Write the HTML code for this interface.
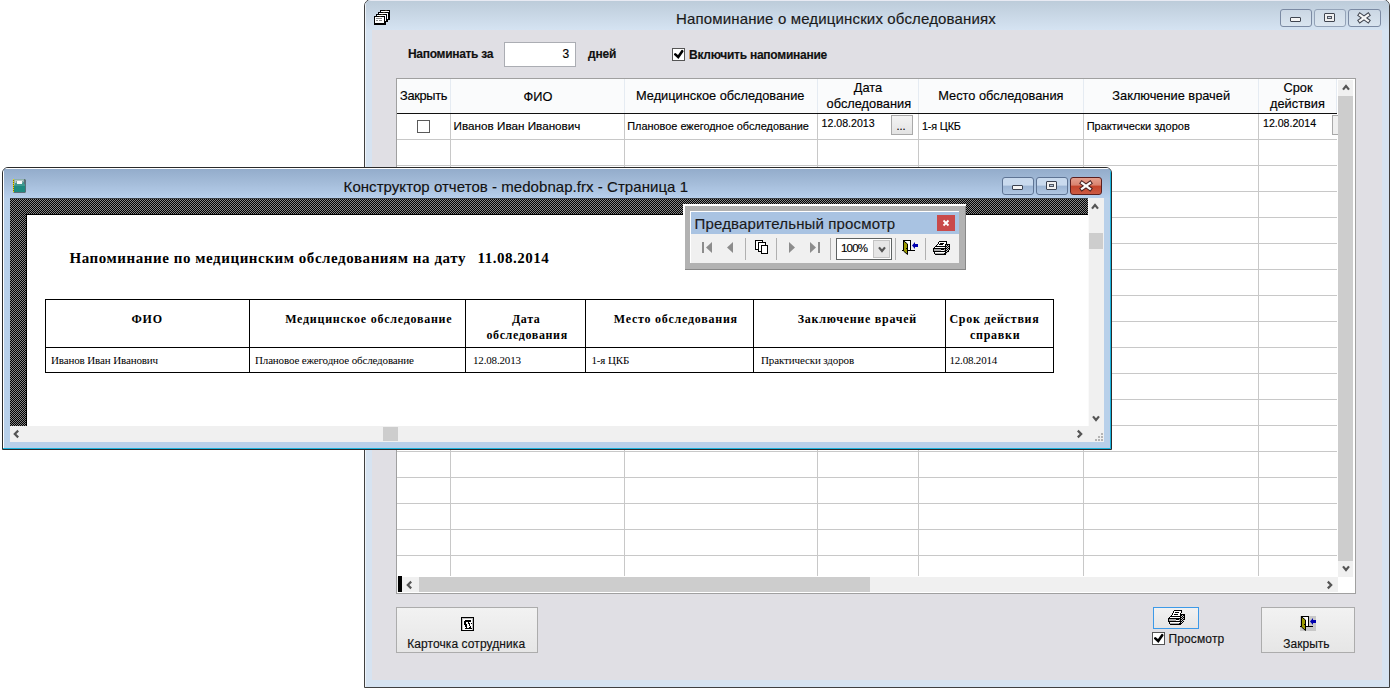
<!DOCTYPE html>
<html><head><meta charset="utf-8">
<style>
*{margin:0;padding:0;box-sizing:border-box}
html,body{width:1393px;height:690px;overflow:hidden;background:#fff;position:relative}
div,span,svg{position:absolute}
.t{font-family:"Liberation Sans",sans-serif;line-height:1;white-space:nowrap;color:#000;-webkit-text-stroke:0.15px currentColor}
.r{font-family:"Liberation Serif",serif;line-height:1;white-space:nowrap;color:#000}
.b{font-weight:bold}
</style></head><body>

<!-- ============ MAIN WINDOW ============ -->
<div id="mw" style="left:364px;top:-1px;width:1026px;height:689px;border:1px solid #404040;border-radius:7px 7px 0 0;background:#d6e3f1;overflow:hidden">
  <div style="left:0;top:0;right:0;height:30px;background:linear-gradient(#bccbd9,#d5e3f2)"></div>
  <div style="left:0;top:0;right:0;height:1px;background:#e8eaf3"></div>
  <div style="left:0;top:0;bottom:0;width:1px;background:#eef3f9"></div>
</div>
<!-- client -->
<div style="left:372px;top:30px;width:1010px;height:650px;background:#e0dfe4"></div>

<span class="t" style="left:676px;top:11px;font-size:15px;letter-spacing:0.15px;color:#1a1a1a">Напоминание о медицинских обследованиях</span>

<!-- main title buttons -->
<div style="left:1280px;top:9px;width:32px;height:18px;border:1px solid #7b8aa3;border-radius:3px;background:linear-gradient(#cbd7e4,#d9e4ef)"><div style="left:9px;top:7px;width:11px;height:5px;border:1px solid #404550;border-radius:1px;background:#f4f4f4"></div></div>
<div style="left:1314px;top:9px;width:32px;height:18px;border:1px solid #94a3b8;border-radius:3px;background:linear-gradient(#cfdbe7,#dce6f0)"><div style="left:9px;top:3px;width:11px;height:9px;border:1px solid #404550;border-radius:1px;background:#f0f0f0"><div style="left:2px;top:2px;width:5px;height:3px;border:1px solid #505560;background:#cfd8e6"></div></div></div>
<div style="left:1348px;top:9px;width:33px;height:18px;border:1px solid #7b8aa3;border-radius:3px;background:linear-gradient(#cbd7e4,#d9e4ef)">
<svg style="left:8px;top:2px" width="14" height="12" viewBox="0 0 14 12"><path d="M3 3 L11 8.8 M11 3 L3 8.8" stroke="#404550" stroke-width="4.2" stroke-linecap="square"/><path d="M3 3 L11 8.8 M11 3 L3 8.8" stroke="#f6f6f6" stroke-width="2.2" stroke-linecap="square"/></svg></div>

<!-- main icon -->
<svg style="left:374px;top:10px;" width="16" height="15" viewBox="0 0 16 15" shape-rendering="crispEdges"><rect x="6" y="0" width="5" height="1" fill="#000"/><rect x="11" y="0" width="2" height="1" fill="#3a2a10"/><rect x="13" y="0" width="3" height="1" fill="#000"/><rect x="6" y="1" width="1" height="1" fill="#000"/><rect x="7" y="1" width="8" height="1" fill="#fff"/><rect x="15" y="1" width="1" height="1" fill="#000"/><rect x="4" y="2" width="5" height="1" fill="#000"/><rect x="9" y="2" width="2" height="1" fill="#3a2a10"/><rect x="11" y="2" width="5" height="1" fill="#000"/><rect x="4" y="3" width="1" height="1" fill="#000"/><rect x="5" y="3" width="9" height="1" fill="#fff"/><rect x="14" y="3" width="2" height="1" fill="#000"/><rect x="2" y="4" width="5" height="1" fill="#000"/><rect x="7" y="4" width="2" height="1" fill="#3a2a10"/><rect x="9" y="4" width="4" height="1" fill="#000"/><rect x="13" y="4" width="1" height="1" fill="#fff"/><rect x="14" y="4" width="2" height="1" fill="#000"/><rect x="2" y="5" width="1" height="1" fill="#000"/><rect x="3" y="5" width="9" height="1" fill="#fff"/><rect x="12" y="5" width="1" height="1" fill="#000"/><rect x="13" y="5" width="1" height="1" fill="#fff"/><rect x="14" y="5" width="2" height="1" fill="#000"/><rect x="0" y="6" width="5" height="1" fill="#000"/><rect x="5" y="6" width="2" height="1" fill="#3a2a10"/><rect x="7" y="6" width="4" height="1" fill="#000"/><rect x="11" y="6" width="1" height="1" fill="#fff"/><rect x="12" y="6" width="1" height="1" fill="#000"/><rect x="13" y="6" width="1" height="1" fill="#fff"/><rect x="14" y="6" width="2" height="1" fill="#000"/><rect x="0" y="7" width="1" height="1" fill="#000"/><rect x="1" y="7" width="9" height="1" fill="#fff"/><rect x="10" y="7" width="1" height="1" fill="#000"/><rect x="11" y="7" width="1" height="1" fill="#fff"/><rect x="12" y="7" width="1" height="1" fill="#000"/><rect x="13" y="7" width="1" height="1" fill="#fff"/><rect x="14" y="7" width="2" height="1" fill="#000"/><rect x="0" y="8" width="1" height="1" fill="#000"/><rect x="1" y="8" width="1" height="1" fill="#fff"/><rect x="2" y="8" width="6" height="1" fill="#888"/><rect x="8" y="8" width="2" height="1" fill="#fff"/><rect x="10" y="8" width="1" height="1" fill="#000"/><rect x="11" y="8" width="1" height="1" fill="#fff"/><rect x="12" y="8" width="1" height="1" fill="#000"/><rect x="13" y="8" width="1" height="1" fill="#fff"/><rect x="14" y="8" width="2" height="1" fill="#000"/><rect x="0" y="9" width="1" height="1" fill="#000"/><rect x="1" y="9" width="9" height="1" fill="#fff"/><rect x="10" y="9" width="1" height="1" fill="#000"/><rect x="11" y="9" width="1" height="1" fill="#fff"/><rect x="12" y="9" width="4" height="1" fill="#000"/><rect x="0" y="10" width="1" height="1" fill="#000"/><rect x="1" y="10" width="1" height="1" fill="#fff"/><rect x="2" y="10" width="2" height="1" fill="#888"/><rect x="4" y="10" width="1" height="1" fill="#fff"/><rect x="5" y="10" width="3" height="1" fill="#888"/><rect x="8" y="10" width="2" height="1" fill="#fff"/><rect x="10" y="10" width="1" height="1" fill="#000"/><rect x="11" y="10" width="1" height="1" fill="#fff"/><rect x="12" y="10" width="2" height="1" fill="#000"/><rect x="0" y="11" width="1" height="1" fill="#000"/><rect x="1" y="11" width="9" height="1" fill="#fff"/><rect x="10" y="11" width="4" height="1" fill="#000"/><rect x="0" y="12" width="1" height="1" fill="#000"/><rect x="1" y="12" width="9" height="1" fill="#fff"/><rect x="10" y="12" width="2" height="1" fill="#000"/><rect x="0" y="13" width="12" height="1" fill="#000"/><rect x="0" y="14" width="12" height="1" fill="#000"/></svg>

<!-- controls row -->
<span class="t b" style="left:408px;top:48.2px;font-size:12px;letter-spacing:-0.3px;color:#111">Напоминать за</span>
<div style="left:504px;top:42px;width:72px;height:25px;border:1px solid #abadb3;background:#fff"></div>
<span class="t" style="left:562.5px;top:48.2px;font-size:12px">3</span>
<span class="t b" style="left:588px;top:48.2px;font-size:12px;letter-spacing:-0.2px;color:#111">дней</span>
<div style="left:672px;top:48px;width:13px;height:13px;border:1px solid #555;background:#fff">
<svg style="left:0px;top:0px" width="11" height="11" viewBox="0 0 11 11"><path d="M2.3 5.4 L5.2 8 L9.2 2.2" stroke="#000" stroke-width="2.6" fill="none" stroke-linecap="round" stroke-linejoin="miter"/></svg></div>
<span class="t b" style="left:689px;top:48.8px;font-size:12px;letter-spacing:-0.25px;color:#111">Включить напоминание</span>

<!-- ============ GRID ============ -->
<div id="grid" style="left:396px;top:78px;width:960px;height:516px;border:1px solid #a0a0a0;background:#fff;overflow:hidden">
  <!-- header -->
  <div style="left:0;top:0;width:940px;height:34px;background:#fafbfc"></div>
  <div style="left:939px;top:0;width:1px;height:34px;background:#e5ebf2"></div>
  <div style="left:0;top:34px;width:940px;height:1px;background:#101010"></div>
  <!-- header dividers -->
  <div style="left:53px;top:0;width:1px;height:34px;background:#e5ebf2"></div>
  <div style="left:227px;top:0;width:1px;height:34px;background:#e5ebf2"></div>
  <div style="left:420px;top:0;width:1px;height:34px;background:#e5ebf2"></div>
  <div style="left:521px;top:0;width:1px;height:34px;background:#e5ebf2"></div>
  <div style="left:686px;top:0;width:1px;height:34px;background:#e5ebf2"></div>
  <div style="left:861px;top:0;width:1px;height:34px;background:#e5ebf2"></div>
  <!-- body row lines -->
  <div style="left:0;top:35px;width:940px;height:461px;background:repeating-linear-gradient(to bottom,transparent 0,transparent 25px,#c8c8c8 25px,#c8c8c8 26px)"></div>
  <!-- body col lines -->
  <div style="left:53px;top:35px;width:1px;height:462px;background:#c8c8c8"></div>
  <div style="left:227px;top:35px;width:1px;height:462px;background:#c8c8c8"></div>
  <div style="left:420px;top:35px;width:1px;height:462px;background:#c8c8c8"></div>
  <div style="left:521px;top:35px;width:1px;height:462px;background:#c8c8c8"></div>
  <div style="left:686px;top:35px;width:1px;height:462px;background:#c8c8c8"></div>
  <div style="left:861px;top:35px;width:1px;height:462px;background:#c8c8c8"></div>
  <!-- v scrollbar -->
  <div style="left:941px;top:1px;width:15px;height:497px;background:#f0f0f0"></div>
  <div style="left:941px;top:17px;width:15px;height:465px;background:#cdcdcd"></div>
  <!-- h scrollbar -->
  <div style="left:0;top:498px;width:941px;height:15px;background:#f0f0f0"></div>
  <div style="left:1px;top:497px;width:4px;height:16px;background:#000"></div>
  <div style="left:22px;top:498px;width:451px;height:15px;background:#cdcdcd"></div>
</div>
<svg style="left:1341px;top:84px" width="10" height="7" viewBox="0 0 10 7"><path d="M2 5.6 L5 2 L8 5.6" stroke="#555" stroke-width="2.2" fill="none"/></svg>
<svg style="left:1341px;top:565px" width="10" height="7" viewBox="0 0 10 7"><path d="M2 1.4 L5 5 L8 1.4" stroke="#555" stroke-width="2.2" fill="none"/></svg>
<svg style="left:406px;top:580px" width="7" height="10" viewBox="0 0 7 10"><path d="M5.2 1.6 L1.8 5 L5.2 8.4" stroke="#555" stroke-width="2.2" fill="none"/></svg>
<svg style="left:1326px;top:580px" width="7" height="10" viewBox="0 0 7 10"><path d="M1.8 1.6 L5.2 5 L1.8 8.4" stroke="#555" stroke-width="2.2" fill="none"/></svg>

<!-- header texts -->
<span class="t" style="left:400px;top:90.2px;font-size:12.8px;letter-spacing:-0.3px">Закрыть</span>
<span class="t" style="left:523.6px;top:90.8px;font-size:12.8px">ФИО</span>
<span class="t" style="left:636px;top:90.4px;font-size:12.8px">Медицинское обследование</span>
<span class="t" style="left:853.8px;top:82.2px;font-size:12.8px">Дата</span>
<span class="t" style="left:826.6px;top:97.6px;font-size:12.8px">обследования</span>
<span class="t" style="left:938.3px;top:90.4px;font-size:12.8px">Место обследования</span>
<span class="t" style="left:1112.3px;top:90.4px;font-size:12.8px">Заключение врачей</span>
<span class="t" style="left:1283.5px;top:82.2px;font-size:12.8px">Срок</span>
<span class="t" style="left:1270px;top:97.8px;font-size:12.8px">действия</span>

<!-- row 1 -->
<div style="left:417px;top:120px;width:13px;height:13px;border:1px solid #5a5a5a;background:#fff"></div>
<span class="t" style="left:453.6px;top:120.1px;font-size:11.7px">Иванов Иван Иванович</span>
<span class="t" style="left:627.3px;top:121.3px;font-size:10.9px">Плановое ежегодное обследование</span>
<span class="t" style="left:821.6px;top:117.8px;font-size:10.6px">12.08.2013</span>
<div style="left:891px;top:115px;width:22px;height:20px;border:1px solid #a9a9a9;background:linear-gradient(#f3f3f3,#e3e3e3)"></div>
<span class="t" style="left:896.5px;top:121px;font-size:11px">...</span>
<span class="t" style="left:922px;top:120.5px;font-size:10.8px;letter-spacing:-0.15px">1-я ЦКБ</span>
<span class="t" style="left:1086.7px;top:121.2px;font-size:11px">Практически здоров</span>
<span class="t" style="left:1263px;top:117.8px;font-size:10.6px">12.08.2014</span>
<div style="left:1332px;top:115px;width:6px;height:20px;border:1px solid #a9a9a9;border-right:none;background:#f0f0f0"></div>

<!-- bottom buttons -->
<div style="left:396px;top:607px;width:142px;height:46px;border:1px solid #acacac;background:linear-gradient(#f2f2f2,#e6e6e6)"></div>
<svg style="left:461px;top:617px;" width="13" height="14" viewBox="0 0 13 14" shape-rendering="crispEdges"><rect x="0" y="0" width="13" height="1" fill="#000"/><rect x="0" y="1" width="1" height="1" fill="#000"/><rect x="1" y="1" width="11" height="1" fill="#c0c0c0"/><rect x="12" y="1" width="1" height="1" fill="#000"/><rect x="0" y="2" width="1" height="1" fill="#000"/><rect x="1" y="2" width="1" height="1" fill="#c0c0c0"/><rect x="2" y="2" width="9" height="1" fill="#fff"/><rect x="11" y="2" width="1" height="1" fill="#c0c0c0"/><rect x="12" y="2" width="1" height="1" fill="#000"/><rect x="0" y="3" width="1" height="1" fill="#000"/><rect x="1" y="3" width="1" height="1" fill="#c0c0c0"/><rect x="2" y="3" width="2" height="1" fill="#fff"/><rect x="4" y="3" width="6" height="1" fill="#000"/><rect x="10" y="3" width="1" height="1" fill="#fff"/><rect x="11" y="3" width="1" height="1" fill="#c0c0c0"/><rect x="12" y="3" width="1" height="1" fill="#000"/><rect x="0" y="4" width="1" height="1" fill="#000"/><rect x="1" y="4" width="1" height="1" fill="#c0c0c0"/><rect x="2" y="4" width="1" height="1" fill="#fff"/><rect x="3" y="4" width="7" height="1" fill="#000"/><rect x="10" y="4" width="1" height="1" fill="#fff"/><rect x="11" y="4" width="1" height="1" fill="#c0c0c0"/><rect x="12" y="4" width="1" height="1" fill="#000"/><rect x="0" y="5" width="1" height="1" fill="#000"/><rect x="1" y="5" width="1" height="1" fill="#c0c0c0"/><rect x="2" y="5" width="1" height="1" fill="#fff"/><rect x="3" y="5" width="2" height="1" fill="#000"/><rect x="5" y="5" width="2" height="1" fill="#fff"/><rect x="7" y="5" width="1" height="1" fill="#000"/><rect x="8" y="5" width="3" height="1" fill="#fff"/><rect x="11" y="5" width="1" height="1" fill="#c0c0c0"/><rect x="12" y="5" width="1" height="1" fill="#000"/><rect x="0" y="6" width="1" height="1" fill="#000"/><rect x="1" y="6" width="1" height="1" fill="#c0c0c0"/><rect x="2" y="6" width="1" height="1" fill="#fff"/><rect x="3" y="6" width="2" height="1" fill="#000"/><rect x="5" y="6" width="2" height="1" fill="#fff"/><rect x="7" y="6" width="2" height="1" fill="#000"/><rect x="9" y="6" width="1" height="1" fill="#fff"/><rect x="10" y="6" width="1" height="1" fill="#000"/><rect x="11" y="6" width="1" height="1" fill="#c0c0c0"/><rect x="12" y="6" width="1" height="1" fill="#000"/><rect x="0" y="7" width="1" height="1" fill="#000"/><rect x="1" y="7" width="1" height="1" fill="#c0c0c0"/><rect x="2" y="7" width="1" height="1" fill="#fff"/><rect x="3" y="7" width="3" height="1" fill="#000"/><rect x="6" y="7" width="2" height="1" fill="#fff"/><rect x="8" y="7" width="1" height="1" fill="#000"/><rect x="9" y="7" width="2" height="1" fill="#fff"/><rect x="11" y="7" width="1" height="1" fill="#c0c0c0"/><rect x="12" y="7" width="1" height="1" fill="#000"/><rect x="0" y="8" width="1" height="1" fill="#000"/><rect x="1" y="8" width="1" height="1" fill="#c0c0c0"/><rect x="2" y="8" width="2" height="1" fill="#fff"/><rect x="4" y="8" width="2" height="1" fill="#000"/><rect x="6" y="8" width="2" height="1" fill="#fff"/><rect x="8" y="8" width="1" height="1" fill="#000"/><rect x="9" y="8" width="2" height="1" fill="#fff"/><rect x="11" y="8" width="1" height="1" fill="#c0c0c0"/><rect x="12" y="8" width="1" height="1" fill="#000"/><rect x="0" y="9" width="1" height="1" fill="#000"/><rect x="1" y="9" width="1" height="1" fill="#c0c0c0"/><rect x="2" y="9" width="2" height="1" fill="#fff"/><rect x="4" y="9" width="2" height="1" fill="#000"/><rect x="6" y="9" width="3" height="1" fill="#fff"/><rect x="9" y="9" width="1" height="1" fill="#000"/><rect x="10" y="9" width="1" height="1" fill="#fff"/><rect x="11" y="9" width="1" height="1" fill="#c0c0c0"/><rect x="12" y="9" width="1" height="1" fill="#000"/><rect x="0" y="10" width="1" height="1" fill="#000"/><rect x="1" y="10" width="1" height="1" fill="#c0c0c0"/><rect x="2" y="10" width="3" height="1" fill="#fff"/><rect x="5" y="10" width="1" height="1" fill="#000"/><rect x="6" y="10" width="2" height="1" fill="#fff"/><rect x="8" y="10" width="2" height="1" fill="#000"/><rect x="10" y="10" width="1" height="1" fill="#fff"/><rect x="11" y="10" width="1" height="1" fill="#c0c0c0"/><rect x="12" y="10" width="1" height="1" fill="#000"/><rect x="0" y="11" width="1" height="1" fill="#000"/><rect x="1" y="11" width="1" height="1" fill="#c0c0c0"/><rect x="2" y="11" width="2" height="1" fill="#fff"/><rect x="4" y="11" width="7" height="1" fill="#000"/><rect x="11" y="11" width="1" height="1" fill="#c0c0c0"/><rect x="12" y="11" width="1" height="1" fill="#000"/><rect x="0" y="12" width="1" height="1" fill="#000"/><rect x="1" y="12" width="1" height="1" fill="#c0c0c0"/><rect x="2" y="12" width="9" height="1" fill="#fff"/><rect x="11" y="12" width="1" height="1" fill="#c0c0c0"/><rect x="12" y="12" width="1" height="1" fill="#000"/><rect x="0" y="13" width="13" height="1" fill="#000"/></svg>
<span class="t" style="left:407.2px;top:637.5px;font-size:12px;letter-spacing:0.09px;color:#111">Карточка сотрудника</span>

<div style="left:1153px;top:607px;width:46px;height:22px;border:1px solid #3d9ae8;background:linear-gradient(#f2f2f2,#e6e6e6)"></div>
<svg style="left:1168px;top:610px;" width="17" height="15" viewBox="0 0 17 15" shape-rendering="crispEdges"><rect x="6" y="0" width="8" height="1" fill="#000"/><rect x="5" y="1" width="1" height="1" fill="#000"/><rect x="6" y="1" width="7" height="1" fill="#fff"/><rect x="13" y="1" width="1" height="1" fill="#000"/><rect x="5" y="2" width="1" height="1" fill="#000"/><rect x="6" y="2" width="1" height="1" fill="#fff"/><rect x="7" y="2" width="4" height="1" fill="#000"/><rect x="11" y="2" width="2" height="1" fill="#fff"/><rect x="13" y="2" width="1" height="1" fill="#000"/><rect x="4" y="3" width="1" height="1" fill="#000"/><rect x="5" y="3" width="7" height="1" fill="#fff"/><rect x="12" y="3" width="1" height="1" fill="#000"/><rect x="4" y="4" width="1" height="1" fill="#000"/><rect x="5" y="4" width="1" height="1" fill="#fff"/><rect x="6" y="4" width="4" height="1" fill="#000"/><rect x="10" y="4" width="2" height="1" fill="#fff"/><rect x="12" y="4" width="5" height="1" fill="#000"/><rect x="3" y="5" width="1" height="1" fill="#000"/><rect x="4" y="5" width="8" height="1" fill="#fff"/><rect x="12" y="5" width="1" height="1" fill="#000"/><rect x="13" y="5" width="1" height="1" fill="#000"/><rect x="14" y="5" width="1" height="1" fill="#c8c8c8"/><rect x="15" y="5" width="1" height="1" fill="#000"/><rect x="16" y="5" width="1" height="1" fill="#000"/><rect x="2" y="6" width="11" height="1" fill="#000"/><rect x="13" y="6" width="1" height="1" fill="#c8c8c8"/><rect x="14" y="6" width="1" height="1" fill="#000"/><rect x="15" y="6" width="1" height="1" fill="#c8c8c8"/><rect x="16" y="6" width="1" height="1" fill="#000"/><rect x="1" y="7" width="1" height="1" fill="#000"/><rect x="2" y="7" width="10" height="1" fill="#fff"/><rect x="12" y="7" width="1" height="1" fill="#000"/><rect x="13" y="7" width="1" height="1" fill="#000"/><rect x="14" y="7" width="1" height="1" fill="#c8c8c8"/><rect x="15" y="7" width="1" height="1" fill="#000"/><rect x="16" y="7" width="1" height="1" fill="#000"/><rect x="0" y="8" width="13" height="1" fill="#000"/><rect x="13" y="8" width="1" height="1" fill="#c8c8c8"/><rect x="14" y="8" width="1" height="1" fill="#000"/><rect x="15" y="8" width="1" height="1" fill="#c8c8c8"/><rect x="16" y="8" width="1" height="1" fill="#000"/><rect x="0" y="9" width="1" height="1" fill="#000"/><rect x="1" y="9" width="7" height="1" fill="#a8a8a8"/><rect x="8" y="9" width="3" height="1" fill="#000"/><rect x="11" y="9" width="1" height="1" fill="#a8a8a8"/><rect x="12" y="9" width="1" height="1" fill="#000"/><rect x="13" y="9" width="1" height="1" fill="#000"/><rect x="14" y="9" width="1" height="1" fill="#c8c8c8"/><rect x="15" y="9" width="1" height="1" fill="#000"/><rect x="16" y="9" width="1" height="1" fill="#000"/><rect x="0" y="10" width="1" height="1" fill="#000"/><rect x="1" y="10" width="7" height="1" fill="#a8a8a8"/><rect x="8" y="10" width="3" height="1" fill="#fff"/><rect x="11" y="10" width="1" height="1" fill="#a8a8a8"/><rect x="12" y="10" width="1" height="1" fill="#000"/><rect x="13" y="10" width="1" height="1" fill="#c8c8c8"/><rect x="14" y="10" width="1" height="1" fill="#000"/><rect x="15" y="10" width="1" height="1" fill="#c8c8c8"/><rect x="0" y="11" width="13" height="1" fill="#000"/><rect x="13" y="11" width="1" height="1" fill="#000"/><rect x="14" y="11" width="1" height="1" fill="#c8c8c8"/><rect x="15" y="11" width="1" height="1" fill="#000"/><rect x="1" y="12" width="1" height="1" fill="#000"/><rect x="2" y="12" width="10" height="1" fill="#fff"/><rect x="12" y="12" width="1" height="1" fill="#000"/><rect x="13" y="12" width="1" height="1" fill="#c8c8c8"/><rect x="14" y="12" width="1" height="1" fill="#000"/><rect x="1" y="13" width="1" height="1" fill="#000"/><rect x="2" y="13" width="9" height="1" fill="#a8a8a8"/><rect x="11" y="13" width="2" height="1" fill="#000"/><rect x="13" y="13" width="1" height="1" fill="#000"/><rect x="2" y="14" width="11" height="1" fill="#000"/></svg>
<div style="left:1152px;top:632px;width:13px;height:13px;border:1px solid #555;background:#fff">
<svg style="left:0px;top:0px" width="11" height="11" viewBox="0 0 11 11"><path d="M2.3 5.4 L5.2 8 L9.2 2.2" stroke="#000" stroke-width="2.6" fill="none" stroke-linecap="round" stroke-linejoin="miter"/></svg></div>
<span class="t" style="left:1168.4px;top:633.1px;font-size:12px;letter-spacing:0.15px;color:#111">Просмотр</span>

<div style="left:1261px;top:607px;width:94px;height:46px;border:1px solid #acacac;background:linear-gradient(#f2f2f2,#e6e6e6)"></div>
<svg style="left:1300px;top:616px" width="17" height="15" viewBox="0 0 17 15"><rect x="0" y="0" width="16" height="15" fill="#c8c8c8"/><rect x="2" y="1" width="6" height="9" fill="#fff"/><path d="M1.5 10.5 V0.5 H8.5 V10.5 M0 10.5 H13" stroke="#000" stroke-width="1" fill="none" shape-rendering="crispEdges"/><path d="M1.5 0.8 L5.5 4 L5.5 14.5 L1.5 11 Z" fill="#9c9a00" stroke="#000" stroke-width="1"/><rect x="4" y="8" width="1" height="1" fill="#000"/><path d="M10 5.5 L13 2 L13 4 L16 4 L16 7 L13 7 L13 9 Z" fill="#0000b0"/></svg>
<span class="t" style="left:1283.3px;top:637.7px;font-size:12px;color:#111">Закрыть</span>

<!-- ============ KONSTRUKTOR WINDOW ============ -->
<div id="kw" style="left:2px;top:167px;width:1110px;height:283px;border:1px solid #2a2a2a;border-radius:6px 6px 0 0;background:#b8d0ea;overflow:hidden">
  <div style="left:0;top:0;right:0;height:30px;background:linear-gradient(#92abca,#a4bcd9 50%,#b7cfec)"></div>
  <div style="left:0;top:0;right:0;height:1px;background:#fff"></div>
  <div style="left:0;top:0;bottom:0;width:1px;background:#fff"></div>
  <div style="left:0;bottom:0;right:0;height:1px;background:#1ab3dd"></div>
  <div style="right:0;top:0;bottom:0;width:1px;background:#1ab3dd"></div>
</div>
<svg style="left:13px;top:179px;" width="13" height="14" viewBox="0 0 13 14" shape-rendering="crispEdges"><rect x="0" y="0" width="1" height="1" fill="#e8e000"/><rect x="1" y="0" width="10" height="1" fill="#8fb0ac"/><rect x="11" y="0" width="1" height="1" fill="#5a6e78"/><rect x="12" y="0" width="1" height="1" fill="#7fa3a0"/><rect x="0" y="1" width="1" height="1" fill="#8a6a00"/><rect x="1" y="1" width="1" height="1" fill="#8fb0ac"/><rect x="2" y="1" width="8" height="1" fill="#b8c8c4"/><rect x="10" y="1" width="1" height="1" fill="#8fb0ac"/><rect x="11" y="1" width="2" height="1" fill="#5a6e78"/><rect x="0" y="2" width="1" height="1" fill="#e8e000"/><rect x="1" y="2" width="1" height="1" fill="#8fb0ac"/><rect x="2" y="2" width="1" height="1" fill="#b8c8c4"/><rect x="3" y="2" width="1" height="1" fill="#7fa3a0"/><rect x="4" y="2" width="5" height="1" fill="#fafafa"/><rect x="9" y="2" width="1" height="1" fill="#7fa3a0"/><rect x="10" y="2" width="1" height="1" fill="#8fb0ac"/><rect x="11" y="2" width="2" height="1" fill="#5a6e78"/><rect x="0" y="3" width="1" height="1" fill="#8a6a00"/><rect x="1" y="3" width="1" height="1" fill="#8fb0ac"/><rect x="2" y="3" width="1" height="1" fill="#b8c8c4"/><rect x="3" y="3" width="1" height="1" fill="#7fa3a0"/><rect x="4" y="3" width="5" height="1" fill="#fafafa"/><rect x="9" y="3" width="1" height="1" fill="#7fa3a0"/><rect x="10" y="3" width="1" height="1" fill="#3f9890"/><rect x="11" y="3" width="2" height="1" fill="#5a6e78"/><rect x="0" y="4" width="1" height="1" fill="#e8e000"/><rect x="1" y="4" width="1" height="1" fill="#8fb0ac"/><rect x="2" y="4" width="2" height="1" fill="#3f9890"/><rect x="4" y="4" width="5" height="1" fill="#fafafa"/><rect x="9" y="4" width="2" height="1" fill="#3f9890"/><rect x="11" y="4" width="2" height="1" fill="#5a6e78"/><rect x="0" y="5" width="1" height="1" fill="#8a6a00"/><rect x="1" y="5" width="1" height="1" fill="#8fb0ac"/><rect x="2" y="5" width="10" height="1" fill="#3f9890"/><rect x="12" y="5" width="1" height="1" fill="#5a6e78"/><rect x="0" y="6" width="1" height="1" fill="#e8e000"/><rect x="1" y="6" width="11" height="1" fill="#3f9890"/><rect x="12" y="6" width="1" height="1" fill="#5a6e78"/><rect x="0" y="7" width="1" height="1" fill="#8a6a00"/><rect x="1" y="7" width="11" height="1" fill="#1e8a80"/><rect x="12" y="7" width="1" height="1" fill="#5a6e78"/><rect x="0" y="8" width="1" height="1" fill="#e8e000"/><rect x="1" y="8" width="11" height="1" fill="#1e8a80"/><rect x="12" y="8" width="1" height="1" fill="#5a6e78"/><rect x="0" y="9" width="1" height="1" fill="#8a6a00"/><rect x="1" y="9" width="11" height="1" fill="#1e8a80"/><rect x="12" y="9" width="1" height="1" fill="#5a6e78"/><rect x="0" y="10" width="1" height="1" fill="#e8e000"/><rect x="1" y="10" width="11" height="1" fill="#1e8a80"/><rect x="12" y="10" width="1" height="1" fill="#5a6e78"/><rect x="0" y="11" width="1" height="1" fill="#8a6a00"/><rect x="1" y="11" width="11" height="1" fill="#1e8a80"/><rect x="12" y="11" width="1" height="1" fill="#5a6e78"/><rect x="0" y="12" width="1" height="1" fill="#e8e000"/><rect x="1" y="12" width="11" height="1" fill="#1e8a80"/><rect x="12" y="12" width="1" height="1" fill="#5a6e78"/><rect x="0" y="13" width="1" height="1" fill="#7fa3a0"/><rect x="1" y="13" width="11" height="1" fill="#5a6e78"/><rect x="12" y="13" width="1" height="1" fill="#7fa3a0"/></svg>
<span class="t" style="left:343.6px;top:179.1px;font-size:15px;letter-spacing:0.05px;color:#111">Конструктор отчетов - medobnap.frx - Страница 1</span>
<!-- k buttons -->
<div style="left:1002px;top:177px;width:32px;height:18px;border:1px solid #5e7494;border-radius:3px;background:linear-gradient(#c9daee 0,#c9daee 45%,#9cb5d4 50%,#b0c7e3)"><div style="left:9px;top:7px;width:11px;height:5px;border:1px solid #3a4150;border-radius:1px;background:#f4f4f4"></div></div>
<div style="left:1036px;top:177px;width:32px;height:18px;border:1px solid #5e7494;border-radius:3px;background:linear-gradient(#c9daee 0,#c9daee 45%,#9cb5d4 50%,#b0c7e3)"><div style="left:9px;top:3px;width:11px;height:9px;border:1px solid #3a4150;border-radius:1px;background:#f0f0f0"><div style="left:2px;top:2px;width:5px;height:3px;border:1px solid #505560;background:#b8c8dc"></div></div></div>
<div style="left:1070px;top:177px;width:32px;height:18px;border:1px solid #5a1e1e;border-radius:3px;background:linear-gradient(#e5a08f 0,#d9826e 45%,#c4442b 50%,#cc5a43)">
<svg style="left:8px;top:2px" width="14" height="12" viewBox="0 0 14 12"><path d="M3 3 L11 8.8 M11 3 L3 8.8" stroke="#4a2020" stroke-width="4.2" stroke-linecap="square"/><path d="M3 3 L11 8.8 M11 3 L3 8.8" stroke="#fafafa" stroke-width="2.2" stroke-linecap="square"/></svg></div>

<!-- k client -->
<div style="left:10px;top:198px;width:1078px;height:228px;background:repeating-conic-gradient(#000 0 25%,#858585 0 50%) 0 0/2px 2px"></div>
<div style="left:27px;top:215px;width:1061px;height:211px;background:#fff"></div>
<div style="left:26px;top:214px;width:1062px;height:1px;background:#000"></div>
<div style="left:26px;top:214px;width:1px;height:212px;background:#000"></div>
<div style="left:10px;top:198px;width:1078px;height:1px;background:#3c4248"></div>
<div style="left:1088px;top:198px;width:16px;height:244px;background:#f0f0f0"></div>
<div style="left:1088px;top:198px;width:1px;height:228px;background:#fafafa"></div>
<div style="left:1089px;top:233px;width:14px;height:16px;background:#cdcdcd"></div>
<div style="left:10px;top:426px;width:1078px;height:16px;background:#f0f0f0"></div>
<div style="left:383px;top:427px;width:15px;height:14px;background:#cdcdcd"></div>
<svg style="left:1090px;top:203px" width="10" height="7" viewBox="0 0 10 7"><path d="M2 5.6 L5 2 L8 5.6" stroke="#555" stroke-width="2.2" fill="none"/></svg>
<svg style="left:1091px;top:415px" width="10" height="7" viewBox="0 0 10 7"><path d="M2 1.4 L5 5 L8 1.4" stroke="#555" stroke-width="2.2" fill="none"/></svg>
<svg style="left:13px;top:429px" width="7" height="10" viewBox="0 0 7 10"><path d="M5.2 1.6 L1.8 5 L5.2 8.4" stroke="#555" stroke-width="2.2" fill="none"/></svg>
<svg style="left:1076px;top:429px" width="7" height="10" viewBox="0 0 7 10"><path d="M1.8 1.6 L5.2 5 L1.8 8.4" stroke="#555" stroke-width="2.2" fill="none"/></svg>

<svg style="left:1094px;top:432px" width="10" height="10" viewBox="0 0 10 10" shape-rendering="crispEdges"><g fill="#b4b4b4"><rect x="7" y="1" width="2" height="2"/><rect x="4" y="4" width="2" height="2"/><rect x="7" y="4" width="2" height="2"/><rect x="1" y="7" width="2" height="2"/><rect x="4" y="7" width="2" height="2"/><rect x="7" y="7" width="2" height="2"/></g></svg>
<!-- report -->
<span class="r b" style="left:69.5px;top:251.2px;font-size:15px;letter-spacing:0.56px">Напоминание по медицинским обследованиям на дату</span>
<span class="r b" style="left:477.5px;top:251.2px;font-size:15px;letter-spacing:0.5px">11.08.2014</span>

<div style="left:45px;top:299px;width:1009px;height:74px;border:1px solid #000"></div>
<div style="left:45px;top:347px;width:1009px;height:1px;background:#000"></div>
<div style="left:249px;top:299px;width:1px;height:74px;background:#000"></div>
<div style="left:465px;top:299px;width:1px;height:74px;background:#000"></div>
<div style="left:585px;top:299px;width:1px;height:74px;background:#000"></div>
<div style="left:753px;top:299px;width:1px;height:74px;background:#000"></div>
<div style="left:945px;top:299px;width:1px;height:74px;background:#000"></div>

<span class="r b" style="left:131.6px;top:312.8px;font-size:12px;letter-spacing:0.7px">ФИО</span>
<span class="r b" style="left:285.2px;top:312.8px;font-size:12px;letter-spacing:0.75px">Медицинское обследование</span>
<span class="r b" style="left:511.9px;top:312.8px;font-size:12px;letter-spacing:0.65px">Дата</span>
<span class="r b" style="left:486.4px;top:328.8px;font-size:12px;letter-spacing:0.63px">обследования</span>
<span class="r b" style="left:613.8px;top:312.8px;font-size:12px;letter-spacing:0.75px">Место обследования</span>
<span class="r b" style="left:797.8px;top:312.8px;font-size:12px;letter-spacing:0.73px">Заключение врачей</span>
<span class="r b" style="left:949.4px;top:312.8px;font-size:12px;letter-spacing:0.72px">Срок действия</span>
<span class="r b" style="left:970px;top:328.8px;font-size:12px;letter-spacing:0.72px">справки</span>

<span class="r" style="left:51px;top:355.3px;font-size:11px;letter-spacing:-0.13px">Иванов Иван Иванович</span>
<span class="r" style="left:255px;top:355.3px;font-size:11px;letter-spacing:-0.15px">Плановое ежегодное обследование</span>
<span class="r" style="left:473px;top:355.3px;font-size:11px;letter-spacing:-0.17px">12.08.2013</span>
<span class="r" style="left:591.4px;top:355.3px;font-size:11px;letter-spacing:-0.1px">1-я ЦКБ</span>
<span class="r" style="left:761px;top:355.3px;font-size:11px;letter-spacing:-0.12px">Практически здоров</span>
<span class="r" style="left:949.4px;top:355.3px;font-size:11px;letter-spacing:-0.17px">12.08.2014</span>

<!-- ============ PREVIEW TOOLBAR ============ -->
<div style="left:683px;top:204px;width:283px;height:66px;background:#fff"></div>
<div style="left:685px;top:206px;width:281px;height:64px;background:#b2b2b2;border-right:1px solid #888;border-bottom:1px solid #888"></div>
<div style="left:690px;top:211px;width:269px;height:52px;background:#f0f0f0;border-top:1px solid #fff;border-left:1px solid #fff"></div>
<div style="left:691px;top:212px;width:268px;height:22px;background:#a9c3e2"></div>
<span class="t" style="left:694.6px;top:216.1px;font-size:15px;letter-spacing:0.14px;color:#1a1a1a">Предварительный просмотр</span>
<div style="left:937px;top:215px;width:18px;height:16px;background:#c94a4a"></div>
<svg style="left:941px;top:218px" width="10" height="10" viewBox="0 0 10 10"><path d="M2.5 2.5 L7.5 7.5 M7.5 2.5 L2.5 7.5" stroke="#fff" stroke-width="1.8"/></svg>

<!-- toolbar icons -->
<svg style="left:700px;top:240px" width="40" height="15" viewBox="0 0 40 15" shape-rendering="crispEdges">
<rect x="2" y="2" width="2" height="11" fill="#8c8c8c"/>
<path d="M6 7.5 L12 2 L12 13 Z" fill="#8c8c8c" shape-rendering="auto"/>
<path d="M27 7.5 L33 2 L33 13 Z" fill="#8c8c8c" shape-rendering="auto"/>
</svg>
<div style="left:745px;top:238px;width:1px;height:22px;background:#b0b0b0"></div>
<svg style="left:755px;top:240px" width="14" height="15" viewBox="0 0 14 15" shape-rendering="crispEdges">
<rect x="0" y="0" width="8" height="10" fill="#000"/><rect x="1" y="1" width="6" height="8" fill="#fff"/>
<rect x="3" y="2" width="8" height="10" fill="#000"/><rect x="4" y="3" width="6" height="8" fill="#fff"/>
<rect x="6" y="5" width="7" height="9" fill="#000"/><rect x="7" y="6" width="5" height="7" fill="#fff"/>
</svg>
<div style="left:776px;top:238px;width:1px;height:22px;background:#b0b0b0"></div>
<svg style="left:786px;top:240px" width="40" height="15" viewBox="0 0 40 15">
<path d="M3 2 L9 7.5 L3 13 Z" fill="#8c8c8c"/>
<path d="M24 2 L30 7.5 L24 13 Z" fill="#8c8c8c"/>
<rect x="32" y="2" width="2" height="11" fill="#8c8c8c"/>
</svg>
<div style="left:830px;top:238px;width:1px;height:22px;background:#b0b0b0"></div>
<div style="left:836px;top:238px;width:56px;height:22px;border:1px solid #5e6262;background:#fff"></div>
<div style="left:873px;top:240px;width:17px;height:18px;border:1px solid #c4c4c4;background:#e6e6e6"></div>
<svg style="left:877px;top:246px" width="10" height="7" viewBox="0 0 10 7"><path d="M2 1.4 L5 5 L8 1.4" stroke="#555" stroke-width="2.2" fill="none"/></svg>
<span class="t" style="left:841px;top:243.2px;font-size:11.5px;letter-spacing:-0.8px">100%</span>
<div style="left:895px;top:238px;width:1px;height:22px;background:#b0b0b0"></div>
<svg style="left:902px;top:240px" width="17" height="15" viewBox="0 0 17 15"><rect x="2" y="1" width="6" height="9" fill="#fff"/><path d="M1.5 10.5 V0.5 H8.5 V10.5 M0 10.5 H13" stroke="#000" stroke-width="1" fill="none" shape-rendering="crispEdges"/><path d="M1.5 0.8 L5.5 4 L5.5 14.5 L1.5 11 Z" fill="#9c9a00" stroke="#000" stroke-width="1"/><rect x="4" y="8" width="1" height="1" fill="#000"/><path d="M10 5.5 L13 2 L13 4 L16 4 L16 7 L13 7 L13 9 Z" fill="#0000b0"/></svg>
<div style="left:925px;top:238px;width:1px;height:22px;background:#b0b0b0"></div>
<svg style="left:933px;top:241px;" width="17" height="14" viewBox="0 0 17 14" shape-rendering="crispEdges"><rect x="6" y="0" width="8" height="1" fill="#000"/><rect x="5" y="1" width="1" height="1" fill="#000"/><rect x="6" y="1" width="7" height="1" fill="#fff"/><rect x="13" y="1" width="1" height="1" fill="#000"/><rect x="5" y="2" width="1" height="1" fill="#000"/><rect x="6" y="2" width="1" height="1" fill="#fff"/><rect x="7" y="2" width="4" height="1" fill="#000"/><rect x="11" y="2" width="2" height="1" fill="#fff"/><rect x="13" y="2" width="1" height="1" fill="#000"/><rect x="4" y="3" width="1" height="1" fill="#000"/><rect x="5" y="3" width="1" height="1" fill="#fff"/><rect x="6" y="3" width="4" height="1" fill="#000"/><rect x="10" y="3" width="2" height="1" fill="#fff"/><rect x="12" y="3" width="5" height="1" fill="#000"/><rect x="3" y="4" width="1" height="1" fill="#000"/><rect x="4" y="4" width="8" height="1" fill="#fff"/><rect x="12" y="4" width="1" height="1" fill="#000"/><rect x="13" y="4" width="1" height="1" fill="#c8c8c8"/><rect x="14" y="4" width="1" height="1" fill="#000"/><rect x="15" y="4" width="1" height="1" fill="#c8c8c8"/><rect x="16" y="4" width="1" height="1" fill="#000"/><rect x="2" y="5" width="11" height="1" fill="#000"/><rect x="13" y="5" width="1" height="1" fill="#000"/><rect x="14" y="5" width="1" height="1" fill="#c8c8c8"/><rect x="15" y="5" width="1" height="1" fill="#000"/><rect x="16" y="5" width="1" height="1" fill="#000"/><rect x="1" y="6" width="1" height="1" fill="#000"/><rect x="2" y="6" width="10" height="1" fill="#fff"/><rect x="12" y="6" width="1" height="1" fill="#000"/><rect x="13" y="6" width="1" height="1" fill="#c8c8c8"/><rect x="14" y="6" width="1" height="1" fill="#000"/><rect x="15" y="6" width="1" height="1" fill="#c8c8c8"/><rect x="16" y="6" width="1" height="1" fill="#000"/><rect x="0" y="7" width="13" height="1" fill="#000"/><rect x="13" y="7" width="1" height="1" fill="#000"/><rect x="14" y="7" width="1" height="1" fill="#c8c8c8"/><rect x="15" y="7" width="1" height="1" fill="#000"/><rect x="16" y="7" width="1" height="1" fill="#000"/><rect x="0" y="8" width="1" height="1" fill="#000"/><rect x="1" y="8" width="7" height="1" fill="#a8a8a8"/><rect x="8" y="8" width="3" height="1" fill="#000"/><rect x="11" y="8" width="1" height="1" fill="#a8a8a8"/><rect x="12" y="8" width="1" height="1" fill="#000"/><rect x="13" y="8" width="1" height="1" fill="#c8c8c8"/><rect x="14" y="8" width="1" height="1" fill="#000"/><rect x="15" y="8" width="1" height="1" fill="#c8c8c8"/><rect x="16" y="8" width="1" height="1" fill="#000"/><rect x="0" y="9" width="1" height="1" fill="#000"/><rect x="1" y="9" width="7" height="1" fill="#a8a8a8"/><rect x="8" y="9" width="3" height="1" fill="#fff"/><rect x="11" y="9" width="1" height="1" fill="#a8a8a8"/><rect x="12" y="9" width="1" height="1" fill="#000"/><rect x="13" y="9" width="1" height="1" fill="#000"/><rect x="14" y="9" width="1" height="1" fill="#c8c8c8"/><rect x="15" y="9" width="1" height="1" fill="#000"/><rect x="0" y="10" width="13" height="1" fill="#000"/><rect x="13" y="10" width="1" height="1" fill="#c8c8c8"/><rect x="14" y="10" width="1" height="1" fill="#000"/><rect x="15" y="10" width="1" height="1" fill="#000"/><rect x="1" y="11" width="1" height="1" fill="#000"/><rect x="2" y="11" width="10" height="1" fill="#fff"/><rect x="12" y="11" width="1" height="1" fill="#000"/><rect x="13" y="11" width="1" height="1" fill="#000"/><rect x="14" y="11" width="1" height="1" fill="#c8c8c8"/><rect x="1" y="12" width="1" height="1" fill="#000"/><rect x="2" y="12" width="9" height="1" fill="#a8a8a8"/><rect x="11" y="12" width="2" height="1" fill="#000"/><rect x="13" y="12" width="1" height="1" fill="#c8c8c8"/><rect x="2" y="13" width="11" height="1" fill="#000"/></svg>

</body></html>
